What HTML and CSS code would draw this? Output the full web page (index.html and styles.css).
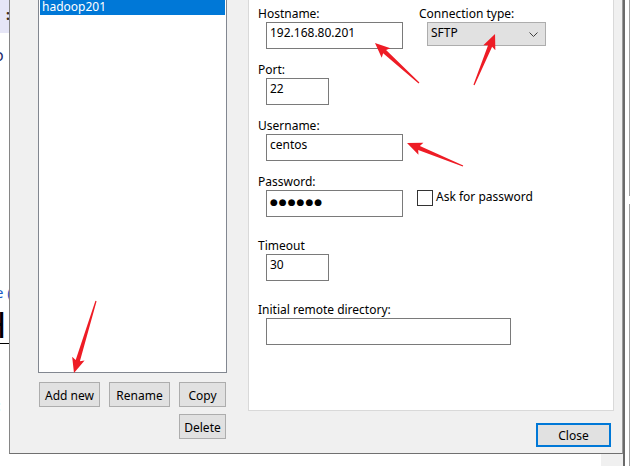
FILE: index.html
```html
<!DOCTYPE html>
<html lang="en">
<head>
<meta charset="UTF-8">
<meta name="viewport" content="width=device-width, initial-scale=1.0">
<title>Site Manager</title>
<link rel="stylesheet" href="styles.css">
</head>
<body>
<div class="desktop">
    <div class="bg-left">
        <div class="bg-band"><span class="frag-colon">:</span></div>
        <div class="frag frag-o">o</div>
        <div class="frag frag-e">e (</div>
        <div class="frag frag-h">H</div>
        <div class="frag frag-dot">:</div>
    </div>

    <div class="main">
        <div class="dialog">
            <div class="sites">
                <div class="site-list">
                    <div class="site-item selected">hadoop201</div>
                </div>
                <div class="site-buttons">
                    <button class="btn btn-wide">Add new</button>
                    <button class="btn btn-wide">Rename</button>
                    <button class="btn btn-narrow">Copy</button>
                </div>
                <div class="site-buttons end">
                    <button class="btn btn-narrow">Delete</button>
                </div>
            </div>

            <div class="details">
                <div class="panel">
                    <div class="row">
                        <div class="field">
                            <label>Hostname:</label>
                            <div class="textbox w-long">192.168.80.201</div>
                        </div>
                        <div class="field conn">
                            <label>Connection type:</label>
                            <div class="select">
                                <span>SFTP</span>
                                <svg class="chevron" width="9" height="5" viewBox="0 0 9 5"><path d="M0.5 0.5 L4.5 4.5 L8.5 0.5" fill="none" stroke="#404040" stroke-width="1"/></svg>
                            </div>
                        </div>
                    </div>
                    <div class="field gap-s">
                        <label>Port:</label>
                        <div class="textbox w-short">22</div>
                    </div>
                    <div class="field gap-s">
                        <label>Username:</label>
                        <div class="textbox w-long">centos</div>
                    </div>
                    <div class="row gap-s">
                        <div class="field">
                            <label>Password:</label>
                            <div class="textbox w-long"><span class="dots">●●●●●●</span></div>
                        </div>
                        <div class="check">
                            <span class="checkbox"></span>
                            <span class="check-text">Ask for password</span>
                        </div>
                    </div>
                    <div class="field gap-l">
                        <label>Timeout</label>
                        <div class="textbox w-short">30</div>
                    </div>
                    <div class="field gap-l">
                        <label>Initial remote directory:</label>
                        <div class="textbox w-dir"></div>
                    </div>
                </div>
                <div class="footer">
                    <button class="btn btn-close">Close</button>
                </div>
            </div>
        </div>
        <div class="below"><div class="below-block"></div></div>
    </div>

    <div class="bg-right">
        <div class="bg-line top"></div>
        <div class="bg-line bottom"></div>
    </div>

    <!-- annotation arrows -->
    <svg class="arrows" width="631" height="466" viewBox="0 0 631 466">
        <g fill="#ee1c25">
            <path transform="translate(419 83) rotate(-137.7)" d="M0,-0.6 L46.5,-2.2 L44.5,-6.5 L59.5,0 L44.5,6.5 L46.5,2.2 L0,0.6Z"/>
            <path transform="translate(474 85) rotate(-67.6)" d="M0,-0.6 L42.2,-2.2 L40.2,-6.5 L55.2,0 L40.2,6.5 L42.2,2.2 L0,0.6Z"/>
            <path transform="translate(463 166) rotate(-157.7)" d="M0,-0.6 L47.5,-2.2 L45.5,-6.5 L60.5,0 L45.5,6.5 L47.5,2.2 L0,0.6Z"/>
            <path transform="translate(96 301) rotate(107)" d="M0,-0.6 L62.3,-2.2 L60.3,-6.5 L75.3,0 L60.3,6.5 L62.3,2.2 L0,0.6Z"/>
        </g>
    </svg>
</div>
</body>
</html>
```

FILE: styles.css
```css
* {
    box-sizing: border-box;
}
body {
    margin: 0;
    font-family: "Noto Sans", "Open Sans", sans-serif;
    font-size: 12px;
    color: #000;
}
.desktop {
    position: relative;
    width: 631px;
    height: 466px;
    overflow: hidden;
    display: flex;
    background: #fff;
}

/* window behind, left edge */
.bg-left {
    width: 9px;
    flex: none;
    overflow: hidden;
    white-space: nowrap;
}
.bg-band {
    height: 33px;
    background: #e6e6f7;
    text-align: right;
    line-height: 30px;
}
.frag-colon {
    font-weight: bold;
    font-size: 14px;
    color: #3a2a10;
    margin-right: -1px;
}
.frag {
    line-height: 16px;
}
.frag-o {
    margin: 14px 0 0 -6px;
    font-size: 16px;
    color: #1b2a6b;
}
.frag-e {
    margin: 221px 0 0 -5px;
    font-size: 15px;
    color: #1e5bc6;
}
.frag-h {
    margin: 9px 0 0 -20px;
    padding-bottom: 2px;
    font-size: 36px;
    line-height: 32px;
    color: #000;
    border-bottom: 1px solid #000;
}
.frag-dot {
    margin: 54px 0 0 -3px;
    font-size: 14px;
    color: #2aa0e8;
}

.main {
    width: 614px;
    flex: none;
    margin-top: -20px;
}
.dialog {
    height: 474px;
    display: flex;
    padding: 0 8px 0 28px;
    background: #f0f0f0;
    border-left: 1px solid #868686;
    border-right: 1px solid #9a9a9a;
    border-bottom: 1px solid #707070;
}

/* site list */
.sites {
    width: 189px;
    flex: none;
    margin-right: 21px;
}
.site-list {
    margin-top: 18px;
    height: 375px;
    padding: 0 1px;
    background: #fff;
    border: 1px solid #828790;
}
.site-item {
    height: 16px;
    line-height: 16px;
    padding-left: 2px;
}
.site-item.selected {
    background: #0078d7;
    color: #fff;
}
.site-buttons {
    display: flex;
    justify-content: space-between;
    padding: 0 1px;
    margin-top: 9px;
}
.site-buttons.end {
    justify-content: flex-end;
    margin-top: 7px;
}
.btn {
    height: 25px;
    padding: 2px 0 0;
    font: inherit;
    color: #000;
    background: #e1e1e1;
    border: 1px solid #adadad;
}
.btn-wide {
    width: 61px;
}
.btn-narrow {
    width: 47px;
}

/* session panel */
.details {
    width: 366px;
    flex: none;
}
.panel {
    height: 431px;
    padding: 24px 0 0 9px;
    background: #fff;
    border: 1px solid #d9d9d9;
}
.row {
    display: flex;
    align-items: flex-start;
}
.field label {
    display: block;
    line-height: 17px;
}
.gap-s {
    margin-top: 12px;
}
.gap-l {
    margin-top: 20px;
}
.textbox {
    margin-left: 8px;
    height: 27px;
    padding: 2px 3px 0;
    line-height: 16px;
    white-space: nowrap;
    background: #fff;
    border: 1px solid #7a7a7a;
}
.w-long {
    width: 137px;
}
.w-short {
    width: 63px;
}
.w-dir {
    width: 245px;
}
.dots {
    font-family: "DejaVu Sans", sans-serif;
    font-size: 9px;
    letter-spacing: 1px;
}
.conn {
    margin-left: 16px;
}
.select {
    margin-left: 8px;
    width: 119px;
    height: 24px;
    display: flex;
    justify-content: space-between;
    align-items: flex-start;
    padding: 2px 0 0 3px;
    line-height: 16px;
    background: #e1e1e1;
    border: 1px solid #adadad;
}
.chevron {
    margin: 7px 7px 0 0;
}
.check {
    display: flex;
    align-items: flex-start;
    margin: 17px 0 0 14px;
}
.checkbox {
    width: 16px;
    height: 16px;
    background: #fff;
    border: 1px solid #333;
}
.check-text {
    margin: -2px 0 0 3px;
    line-height: 17px;
}

.footer {
    display: flex;
    justify-content: flex-end;
    margin-top: 12px;
    padding-right: 3px;
}
.btn-close {
    width: 75px;
    height: 24px;
    padding-top: 1px;
    border: 2px solid #0078d7;
}

.below {
    height: 12px;
    display: flex;
    justify-content: flex-end;
}
.below-block {
    width: 22px;
    background: #f0f0f0;
}

/* window behind, right edge */
.bg-right {
    width: 8px;
    flex: none;
    display: flex;
    flex-direction: column;
    border-left: 2px solid #6a6a6a;
}
.bg-line {
    width: 1px;
    margin-left: 4px;
    background: #a0a0a0;
}
.bg-line.top {
    height: 196px;
}
.bg-line.bottom {
    flex: 1;
    margin-top: 8px;
    border-top: 1px solid #a0a0a0;
}

.arrows {
    position: absolute;
    left: 0;
    top: 0;
    pointer-events: none;
}
```
